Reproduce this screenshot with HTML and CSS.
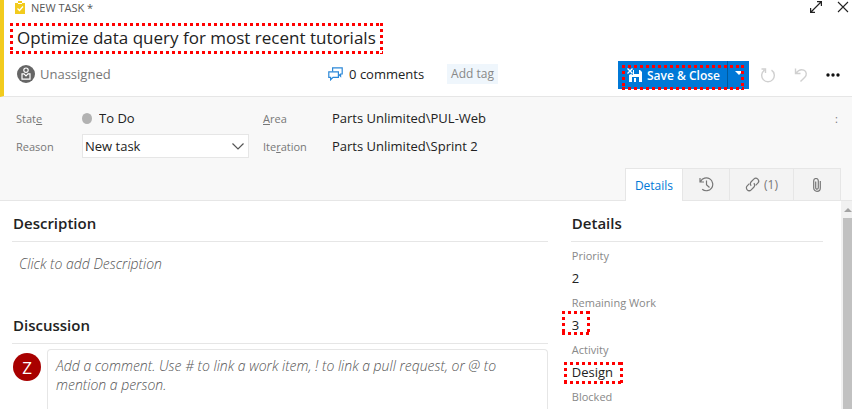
FILE: index.html
```html
<!DOCTYPE html>
<html lang="en">
<head>
    <meta charset="utf-8">
    <title>New Task</title>
    <link rel="stylesheet" href="styles.css">
</head>
<body>
    <header class="task-header">
        <div class="title-row">
            <svg class="task-icon" width="10" height="13" viewBox="0 0 10 13">
                <path d="M0 2h3V0h4v2h3v11H0z" fill="#f2cb1d"/>
                <path d="M2.5 7.5l2 2 3.5-4" fill="none" stroke="#fff" stroke-width="1.2"/>
                <path d="M3 2.5h4" stroke="#fff" stroke-width="1"/>
            </svg>
            <span class="task-type">NEW TASK *</span>
            <button class="icon-btn" aria-label="Full screen">
                <svg width="12" height="12" viewBox="0 0 12 12" fill="none" stroke="#222" stroke-width="1.2">
                    <path d="M1 11L11 1M7 .6h4.4V5M.6 7v4.4H5"/>
                </svg>
            </button>
            <button class="icon-btn" aria-label="Close">
                <svg width="12" height="12" viewBox="0 0 12 12" fill="none" stroke="#222" stroke-width="1.1">
                    <path d="M1 1l10 10M11 1L1 11"/>
                </svg>
            </button>
        </div>

        <div class="task-title marked">
            <input type="text" aria-label="Title" value="Optimize data query for most recent tutorials">
        </div>

        <div class="action-row">
            <button class="assignee">
                <svg width="18" height="18" viewBox="0 0 18 18">
                    <circle cx="9" cy="9" r="9" fill="#666"/>
                    <g fill="none" stroke="#fff" stroke-width="1.2">
                        <circle cx="9" cy="5.2" r="2.2"/>
                        <path d="M5 8.2v6h8v-6M5 8.8h2L9 10.8l2-2h2"/>
                    </g>
                </svg>
                Unassigned
            </button>
            <div class="discussion-info">
                <a href="#discussion" class="comments">
                    <svg width="15" height="14" viewBox="0 0 15 14" fill="none" stroke="#2b88d8" stroke-width="1.2">
                        <path d="M4.6 4.5V.8h9.6V7h-1.6v2.2L10.4 7"/>
                        <path d="M.8 4.8h9.6v5.6H5l-2.4 2.4v-2.4H.8z"/>
                    </svg>
                    0 comments
                </a>
                <button class="add-tag">Add tag</button>
            </div>
            <div class="save-group marked">
                <button class="save-btn">
                    <svg width="15" height="14" viewBox="0 0 15 14">
                        <path d="M6 2h7l2 2v10H2V7l2-1 2 1z" fill="#fff"/>
                        <path d="M7 2h5v4H7zM5 9h7v5H5z" fill="#0078d7"/>
                        <path d="M7 10h2v4H7z" fill="#fff"/>
                        <path d="M.5.5l5 5M5.5.5l-5 5" stroke="#fff" stroke-width="1.3"/>
                    </svg>
                    Save &amp; Close
                </button>
                <button class="save-more" aria-label="More save options">
                    <svg width="8" height="4" viewBox="0 0 8 4"><path d="M0 0h8L4 4z" fill="#fff"/></svg>
                </button>
            </div>
            <div class="toolbar">
                <button class="icon-btn" aria-label="Refresh">
                    <svg width="16" height="16" viewBox="0 0 16 16" fill="none" stroke="#d0d0d0" stroke-width="1.4">
                        <path d="M11.5 3.2A6.3 6.3 0 1 1 4.5 3.2M1.5 2h4v4"/>
                    </svg>
                </button>
                <button class="icon-btn" aria-label="Undo">
                    <svg width="16" height="16" viewBox="0 0 16 16" fill="none" stroke="#d0d0d0" stroke-width="1.4">
                        <path d="M2.5 1.5v5h5M2.8 6.2C5 3.5 8.2 2 10.8 3.2c3 1.4 3.2 4.8 1 7L7.5 14.5"/>
                    </svg>
                </button>
                <button class="icon-btn" aria-label="More actions">
                    <svg width="14" height="4" viewBox="0 0 14 4" fill="#111">
                        <circle cx="2" cy="2" r="1.7"/><circle cx="7" cy="2" r="1.7"/><circle cx="12" cy="2" r="1.7"/>
                    </svg>
                </button>
            </div>
        </div>
    </header>

    <section class="task-meta">
        <div class="meta-fields">
            <label for="state">Stat<u>e</u></label>
            <div class="state">
                <span class="state-dot"></span>
                <input type="text" id="state" value="To Do">
            </div>
            <label for="area"><u>A</u>rea</label>
            <input type="text" id="area" value="Parts Unlimited\PUL-Web">
            <span class="meta-more">:</span>

            <label for="reason">Reason</label>
            <div class="select-box">
                <select id="reason">
                    <option>New task</option>
                </select>
                <svg width="12" height="7" viewBox="0 0 12 7" fill="none" stroke="#555" stroke-width="1.2">
                    <path d="M.5.5L6 6 11.5.5"/>
                </svg>
            </div>
            <label for="iteration">Ite<u>r</u>ation</label>
            <input type="text" id="iteration" value="Parts Unlimited\Sprint 2">
        </div>

        <nav class="tabs">
            <a href="#details" class="tab active">Details</a>
            <a href="#history" class="tab tab-icon" aria-label="History">
                <svg width="15" height="15" viewBox="0 0 15 15" fill="none" stroke="#777" stroke-width="1.2">
                    <path d="M1.6 4.5A6.4 6.4 0 1 1 3.2 12.2M1 1v4h4M7.5 3.5v4.3l3 2.7"/>
                </svg>
            </a>
            <a href="#links" class="tab tab-links">
                <svg width="15" height="15" viewBox="0 0 15 15" fill="none" stroke="#777" stroke-width="1.2">
                    <path d="M6.2 8.8a2.8 2.8 0 0 1 0-4L8.8 2.2a2.8 2.8 0 0 1 4 4L10.6 8.4"/>
                    <path d="M8.8 6.2a2.8 2.8 0 0 1 0 4L6.2 12.8a2.8 2.8 0 0 1-4-4L4.4 6.6"/>
                </svg>
                (1)
            </a>
            <a href="#attachments" class="tab tab-icon" aria-label="Attachments">
                <svg width="8" height="14" viewBox="0 0 8 14" fill="none" stroke="#777" stroke-width="1.2">
                    <path d="M2.7 3.5v6.3a1.3 1.3 0 0 0 2.6 0V2.8a2.2 2.2 0 0 0-4.6 0V10a3.3 3.3 0 0 0 6.6 0V3"/>
                </svg>
            </a>
        </nav>
    </section>

    <main class="task-body">
        <div class="columns">
            <section class="main-column">
                <h2>Description</h2>
                <textarea class="description" aria-label="Description" placeholder="Click to add Description"></textarea>
                <h2 id="discussion">Discussion</h2>
                <div class="comment-row">
                    <span class="avatar">Z</span>
                    <textarea class="comment-box" aria-label="Comment" placeholder="Add a comment. Use # to link a work item, ! to link a pull request, or @ to mention a person."></textarea>
                </div>
            </section>

            <section class="details-column" id="details">
                <h2>Details</h2>
                <div class="field">
                    <label for="priority">Priority</label>
                    <input type="text" id="priority" value="2">
                </div>
                <div class="field">
                    <label for="remaining">Remaining Work</label>
                    <div class="marked mark-number"><input type="text" id="remaining" value="3"></div>
                </div>
                <div class="field">
                    <label for="activity">Activity</label>
                    <div class="marked mark-word"><input type="text" id="activity" value="Design"></div>
                </div>
                <div class="field">
                    <label for="blocked">Blocked</label>
                    <input type="text" id="blocked">
                </div>
            </section>
        </div>
        <div class="scrollbar">
            <svg width="8" height="4" viewBox="0 0 8 4"><path d="M4 0l4 4H0z" fill="#a3a3a3"/></svg>
            <div class="scroll-thumb"></div>
        </div>
    </main>
</body>
</html>
```
FILE: styles.css
```css
* {
    box-sizing: border-box;
}
body {
    margin: 0;
    height: 100vh;
    display: flex;
    flex-direction: column;
    overflow: hidden;
    font-family: "Segoe UI", "Open Sans", sans-serif;
    font-size: 13px;
    color: #222;
    background-color: #fff;
}
button, input, select, textarea {
    font: inherit;
    color: inherit;
    border: none;
    padding: 0;
    margin: 0;
    background: none;
    outline: none;
    min-width: 0;
}
button {
    cursor: pointer;
}
a {
    color: inherit;
    text-decoration: none;
}
svg {
    display: block;
    flex: none;
}

/* dotted red highlight */
.marked {
    position: relative;
}
.marked::after {
    content: "";
    position: absolute;
    inset: 0;
    pointer-events: none;
    background:
        repeating-linear-gradient(90deg, #f00 0 3px, transparent 3px 6px) top / 100% 3px no-repeat,
        repeating-linear-gradient(90deg, #f00 0 3px, transparent 3px 6px) bottom / 100% 3px no-repeat,
        repeating-linear-gradient(#f00 0 3px, transparent 3px 6px) left / 3px 100% no-repeat,
        repeating-linear-gradient(#f00 0 3px, transparent 3px 6px) right / 3px 100% no-repeat;
}

/* header */
.task-header {
    flex: none;
    border-left: 4px solid #f2cb1d;
    border-bottom: 1px solid #e6e6e6;
    padding-bottom: 7px;
}
.title-row {
    display: flex;
    align-items: center;
    gap: 15px;
    height: 14px;
    margin-bottom: 9px;
    padding: 0 3px 0 11px;
}
.task-type {
    flex: 1;
    margin-left: -9px;
    font-size: 11px;
    color: #555;
}
.icon-btn {
    display: flex;
}
.task-title {
    width: 373px;
    max-width: 100%;
    height: 31px;
    margin-left: 6px;
    padding: 0 7px;
}
.task-title input {
    display: block;
    width: 100%;
    height: 28px;
    font-size: 17px;
}
.action-row {
    display: flex;
    align-items: center;
    height: 28px;
    margin-top: 7px;
    padding: 0 12px 0 13px;
}
.assignee {
    display: flex;
    align-items: center;
    gap: 5px;
    margin-bottom: 3px;
    color: #777;
}
.discussion-info {
    flex: 1;
    display: flex;
    justify-content: flex-end;
    align-items: center;
    gap: 23px;
    margin: 0 120px 3px 0;
}
.comments {
    display: flex;
    align-items: center;
    gap: 6px;
}
.add-tag {
    height: 20px;
    padding: 0 4px;
    font-size: 12px;
    color: #888;
    background-color: #eff6fc;
}
.save-group {
    display: flex;
    height: 28px;
    color: #fff;
    background-color: #0078d7;
}
.save-group::after {
    inset: 4px 5px -1px 4px;
}
.save-btn {
    display: flex;
    align-items: center;
    gap: 5px;
    padding: 0 7px 0 9px;
    font-size: 12px;
    font-weight: 600;
}
.save-more {
    display: flex;
    align-items: center;
    justify-content: center;
    width: 22px;
    padding-bottom: 4px;
    border-left: 1px solid #005a9e;
}
.toolbar {
    display: flex;
    align-items: center;
    gap: 17px;
    margin-left: 11px;
}

/* state, area, tabs */
.task-meta {
    flex: none;
    background-color: #f8f8f8;
    border-bottom: 1px solid #e6e6e6;
}
.meta-fields {
    display: grid;
    grid-template-columns: 66px 167px 69px 1fr auto;
    grid-template-rows: 24px 24px;
    row-gap: 4px;
    align-items: center;
    margin-left: 16px;
    padding: 9px 14px 10px 0;
}
.meta-fields label {
    font-size: 11px;
    color: #777;
}
.meta-fields label[for="area"],
.meta-fields label[for="iteration"] {
    margin-left: 14px;
}
.meta-fields > input {
    margin-left: 14px;
}
.meta-more {
    font-size: 11px;
    color: #777;
}
.state {
    display: flex;
    align-items: center;
    gap: 7px;
}
.state-dot {
    width: 11px;
    height: 11px;
    border-radius: 50%;
    background-color: #b2b2b2;
}
.select-box {
    display: grid;
    align-items: center;
}
.select-box select,
.select-box svg {
    grid-area: 1 / 1;
}
.select-box select {
    appearance: none;
    width: 100%;
    height: 24px;
    padding: 0 2px;
    border: 1px solid #e6e6e6;
    background-color: #fff;
}
.select-box svg {
    justify-self: end;
    margin-right: 5px;
    pointer-events: none;
}
.tabs {
    display: flex;
    justify-content: flex-end;
    height: 32px;
    margin-right: 11px;
}
.tab {
    display: flex;
    align-items: center;
    justify-content: center;
    gap: 4px;
    padding: 0 15px;
    font-size: 12px;
    color: #777;
    background-color: #f3f3f3;
    border-top: 1px solid #e6e6e6;
    border-right: 1px solid #e6e6e6;
}
.tab.active {
    padding: 0 9px;
    margin-bottom: -1px;
    color: #0078d7;
    background-color: #fff;
    border-left: 1px solid #e6e6e6;
}
.tab-icon {
    width: 47px;
}

/* body */
.task-body {
    flex: 1;
    display: flex;
    min-height: 0;
}
.columns {
    flex: 1;
    display: grid;
    grid-template-columns: 17fr 8fr;
    column-gap: 23px;
    padding: 0 18px 0 12px;
    overflow: hidden;
}
.main-column {
    display: flex;
    flex-direction: column;
}
h2 {
    flex: none;
    margin: 0;
    height: 41px;
    padding-left: 1px;
    font-size: 15px;
    line-height: 44px;
    font-weight: 600;
    border-bottom: 1px solid #e6e6e6;
}
textarea {
    display: block;
    resize: none;
    font-size: 14px;
    line-height: 19px;
}
textarea::placeholder {
    color: #555;
    font-style: italic;
    font-weight: 300;
}
.description {
    flex: none;
    height: 61px;
    padding: 12px 7px;
}
.comment-row {
    flex: 1;
    display: flex;
    gap: 6px;
    padding: 5px 0 0 1px;
}
.avatar {
    display: flex;
    align-items: center;
    justify-content: center;
    width: 28px;
    height: 28px;
    margin-top: 4px;
    border-radius: 50%;
    font-size: 17px;
    color: #fff;
    background-color: #a80000;
}
.comment-box {
    flex: 1;
    padding: 6px 8px;
    border: 1px solid #e6e6e6;
    border-bottom: none;
    border-radius: 4px 4px 0 0;
}
.details-column h2 {
    margin-bottom: 4px;
}
.field {
    margin-bottom: 3px;
    padding-left: 1px;
}
.field label {
    display: block;
    line-height: 20px;
    font-size: 11px;
    color: #888;
}
.field input {
    display: block;
    width: 100%;
    height: 24px;
}
.mark-number::after {
    inset: -2px auto auto -10px;
    width: 28px;
    height: 24px;
}
.mark-word::after {
    inset: 2px auto auto -8px;
    width: 59px;
    height: 22px;
}
.scrollbar {
    flex: none;
    display: flex;
    flex-direction: column;
    align-items: flex-end;
    width: 11px;
    padding: 7px 0 0 2px;
    overflow: hidden;
    background-color: #f1f1f1;
}
.scroll-thumb {
    flex: 1;
    width: 100%;
    margin-top: 6px;
    background-color: #c1c1c1;
}
```
